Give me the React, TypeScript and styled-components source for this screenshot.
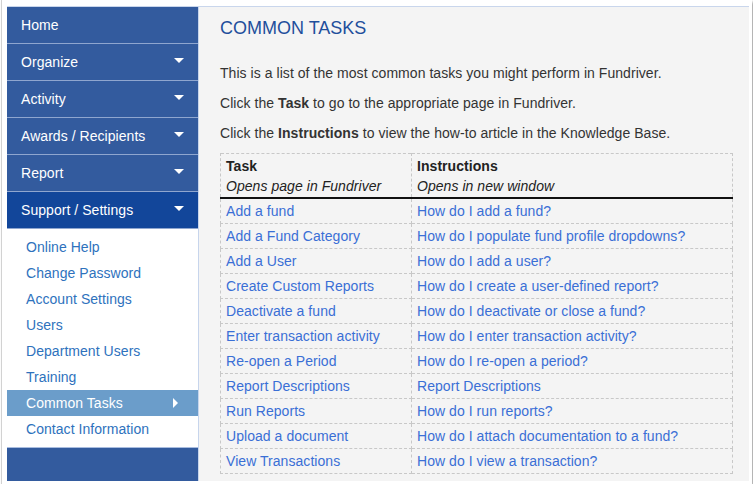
import React from "react"
import styled, { createGlobalStyle } from "styled-components"

const GlobalStyle = createGlobalStyle`
  body {
    margin: 0;
    background: #ffffff;
    font-family: "Liberation Sans", Arial, sans-serif;
  }
`

const Shell = styled.div`
  width: 742px;
  margin-left: 1px;
  padding: 6px 3px 3px 5px;
  background: #ffffff;
  border-left: 1px solid #d2d2d2;
  box-shadow: 2px 2px 3px rgba(0, 0, 0, 0.35);
`

const Page = styled.div`
  display: flex;
  height: 474px;
  border-top: 1px solid #c9d6ec;
`

const Sidebar = styled.nav`
  display: flex;
  flex-direction: column;
  width: 191px;
  background: #ffffff;
`

const NavItem = styled.div<{ $active?: boolean }>`
  display: flex;
  align-items: center;
  justify-content: space-between;
  height: 36px;
  padding: 0 14px;
  border-bottom: 1px solid #8fa6cf;
  background: ${p => (p.$active ? "#12469a" : "#335b9e")};
  color: #ffffff;
  font-size: 14px;
  letter-spacing: 0.05px;
`

const Caret = styled.span<{ $dir: "down" | "right" }>`
  width: 0;
  height: 0;
  ${p =>
    p.$dir === "down"
      ? `
    margin-top: -4px;
    border-left: 5px solid transparent;
    border-right: 5px solid transparent;
    border-top: 5px solid #ffffff;
  `
      : `
    margin-right: 6px;
    border-top: 5px solid transparent;
    border-bottom: 5px solid transparent;
    border-left: 5px solid #ffffff;
  `}
`

const SubMenu = styled.div`
  display: flex;
  flex-direction: column;
  padding: 5px 0;
`

const SubItem = styled.div<{ $active?: boolean }>`
  display: flex;
  align-items: center;
  justify-content: space-between;
  height: 26px;
  padding: 0 14px 0 19px;
  font-size: 14px;
  letter-spacing: 0.05px;
  color: ${p => (p.$active ? "#ffffff" : "#2e72bd")};
  background: ${p => (p.$active ? "#6b9dca" : "transparent")};
`

const SideFooter = styled.div`
  flex: 1;
  background: #335b9e;
  border-top: 1px solid #a9bde0;
`

const Content = styled.main`
  flex: 1;
  background: #f4f4f4;
  border-left: 1px solid #c7d5ec;
  padding: 11px 0 0 21px;
`

const Heading = styled.h1`
  margin: 0;
  font-size: 18px;
  line-height: 20px;
  font-weight: normal;
  color: #1f4f9c;
`

const Para = styled.p`
  margin: 0 0 10px;
  font-size: 14px;
  line-height: 20px;
  letter-spacing: 0.05px;
  color: #333333;
  &:first-of-type {
    margin-top: 25px;
  }
`

const Table = styled.table`
  width: 513px;
  border-collapse: collapse;
  border: 1px dashed #c8c8c8;
  font-size: 14px;
  line-height: 20px;
  letter-spacing: 0.05px;
`

const HeadCell = styled.th<{ $w?: number }>`
  text-align: left;
  vertical-align: top;
  padding: 2px 5px 1px;
  border-left: 1px dashed #c8c8c8;
  border-bottom: 2px solid #111111;
  color: #222222;
  width: ${p => (p.$w ? `${p.$w}px` : "auto")};
`

const HeadTitle = styled.div`
  font-weight: bold;
`

const HeadNote = styled.div`
  font-weight: normal;
  font-style: italic;
`

const Cell = styled.td`
  padding: 2px 5px;
  border: 1px dashed #c8c8c8;
  white-space: nowrap;
`

const Link = styled.a`
  color: #3a6fd6;
  text-decoration: none;
`

const navItems = [
  { label: "Home", caret: false },
  { label: "Organize", caret: true },
  { label: "Activity", caret: true },
  { label: "Awards / Recipients", caret: true },
  { label: "Report", caret: true },
  { label: "Support / Settings", caret: true, active: true }
]

const subItems = [
  "Online Help",
  "Change Password",
  "Account Settings",
  "Users",
  "Department Users",
  "Training",
  "Common Tasks",
  "Contact Information"
]

const tasks = [
  ["Add a fund", "How do I add a fund?"],
  ["Add a Fund Category", "How do I populate fund profile dropdowns?"],
  ["Add a User", "How do I add a user?"],
  ["Create Custom Reports", "How do I create a user-defined report?"],
  ["Deactivate a fund", "How do I deactivate or close a fund?"],
  ["Enter transaction activity", "How do I enter transaction activity?"],
  ["Re-open a Period", "How do I re-open a period?"],
  ["Report Descriptions", "Report Descriptions"],
  ["Run Reports", "How do I run reports?"],
  ["Upload a document", "How do I attach documentation to a fund?"],
  ["View Transactions", "How do I view a transaction?"]
]

export default function App() {
  return (
    <>
      <GlobalStyle />
      <Shell>
        <Page>
          <Sidebar>
            {navItems.map(item => (
              <NavItem key={item.label} $active={item.active}>
                <span>{item.label}</span>
                {item.caret && <Caret $dir="down" />}
              </NavItem>
            ))}
            <SubMenu>
              {subItems.map(label => (
                <SubItem key={label} $active={label === "Common Tasks"}>
                  <span>{label}</span>
                  {label === "Common Tasks" && <Caret $dir="right" />}
                </SubItem>
              ))}
            </SubMenu>
            <SideFooter />
          </Sidebar>
          <Content>
            <Heading>COMMON TASKS</Heading>
            <Para>This is a list of the most common tasks you might perform in Fundriver.</Para>
            <Para>
              Click the <b>Task</b> to go to the appropriate page in Fundriver.
            </Para>
            <Para>
              Click the <b>Instructions</b> to view the how-to article in the Knowledge Base.
            </Para>
            <Table>
              <thead>
                <tr>
                  <HeadCell $w={180}>
                    <HeadTitle>Task</HeadTitle>
                    <HeadNote>Opens page in Fundriver</HeadNote>
                  </HeadCell>
                  <HeadCell>
                    <HeadTitle>Instructions</HeadTitle>
                    <HeadNote>Opens in new window</HeadNote>
                  </HeadCell>
                </tr>
              </thead>
              <tbody>
                {tasks.map(([task, help]) => (
                  <tr key={task}>
                    <Cell>
                      <Link href="#">{task}</Link>
                    </Cell>
                    <Cell>
                      <Link href="#">{help}</Link>
                    </Cell>
                  </tr>
                ))}
              </tbody>
            </Table>
          </Content>
        </Page>
      </Shell>
    </>
  )
}
